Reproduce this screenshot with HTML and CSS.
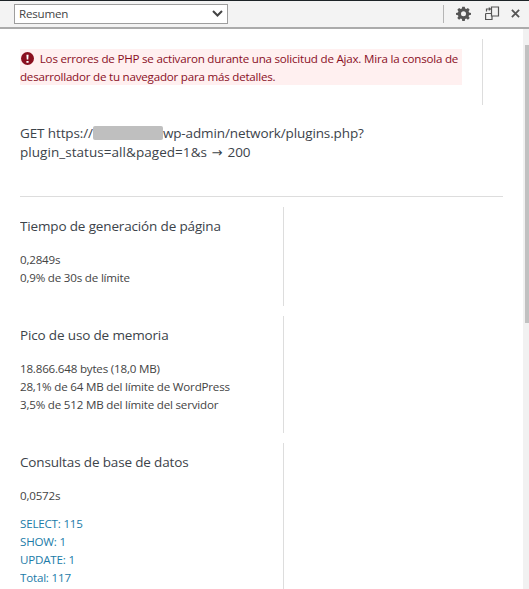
FILE: index.html
```html
<!DOCTYPE html>
<html lang="es">
<head>
<meta charset="utf-8">
<title>Resumen</title>
<link rel="stylesheet" href="styles.css">
</head>
<body>
<header class="toolbar">
  <div class="select"><span>Resumen</span>
    <svg class="chev" width="11" height="7" viewBox="0 0 11 7"><path d="M1 1l4.500 4.500L10 1" fill="none" stroke="#444" stroke-width="2"/></svg>
  </div>
  <div class="tools">
    <span class="sep"></span>
    <svg class="gear" width="15" height="15" viewBox="0 0 24 24"><path fill="#555" fill-rule="evenodd" d="M10 1h4l.6 3.100 1.900.8L19.100 3.100 21.900 5.900 20.100 8.500l.8 1.900L24 11v3l-3.100.6-.8 1.900 1.800 2.600-2.800 2.800-2.600-1.800-1.900.8L14 24h-4l-.6-3.100-1.900-.8-2.600 1.800-2.800-2.800 1.800-2.600-.8-1.900L0 14v-3l3.100-.6.8-1.900L2.100 5.900 4.900 3.100 7.500 4.900l1.900-.8zM12 8.500a4 4 0 1 0 0 8 4 4 0 0 0 0-8z"/></svg>
    <svg class="dock" width="15" height="15" viewBox="0 0 15 15"><path fill="none" stroke="#555" stroke-width="1.200" d="M6.500 1h7v9h-7zM.6 7.500h6.400M.6 7.500v6h6.400v-3.500M1.500 5.500V3h3"/><path fill="#555" d="M3.800 1l2.500 2-2.500 2z"/></svg>
    <svg class="close" width="9" height="9" viewBox="0 0 10 10"><path d="M1 1l8 8M9 1l-8 8" stroke="#555" stroke-width="2"/></svg>
  </div>
</header>
<div class="body">
  <main class="content">
    <div class="top">
      <p class="alert"><svg class="err" width="13" height="13" viewBox="0 0 12 12"><circle cx="6" cy="6" r="6" fill="#8a0f1f"/><path d="M5 2.500h2l-.3 4.500H5.300zM5 8.200h2v1.700H5z" fill="#fff"/></svg> Los errores de PHP se activaron durante una solicitud de Ajax. Mira la consola de desarrollador de tu navegador para más detalles.</p>
    </div>
    <p class="req">GET https://<span class="mask"></span>wp-admin/network/plugins.php?<br><span class="line2">plugin_status=all&amp;paged=1&amp;s</span> <span class="arrow">→</span> 200</p>
    <hr class="rule">
    <section class="sec s1">
      <h2>Tiempo de generación de página</h2>
      <p>0,2849s<br>0,9% de 30s de límite</p>
    </section>
    <section class="sec s2">
      <h2>Pico de uso de memoria</h2>
      <p>18.866.648 bytes (18,0 MB)<br>28,1% de 64 MB del límite de WordPress<br>3,5% de 512 MB del límite del servidor</p>
    </section>
    <section class="sec s3">
      <h2>Consultas de base de datos</h2>
      <p>0,0572s</p>
      <p class="links"><a>SELECT: 115</a><br><a>SHOW: 1</a><br><a>UPDATE: 1</a><br><a>Total: 117</a></p>
    </section>
  </main>
  <div class="scroll"><div class="thumb"></div></div>
</div>
</body>
</html>
```
FILE: styles.css
```css
* { box-sizing: border-box; }
html, body { margin: 0; height: 589px; overflow: hidden; }
body {
  background: #fff;
  color: #444;
  font: 11.6px/18px "Open Sans", "Noto Sans", sans-serif;
  letter-spacing: -.2px;
  display: flex;
  flex-direction: column;
}
.toolbar {
  height: 29px;
  flex: none;
  background: #f3f3f3;
  border-top: 1px solid #1d2327;
  border-bottom: 2px solid #ababab;
  display: flex;
  align-items: center;
  justify-content: space-between;
  padding: 0 9px 1px 14px;
}
.select {
  width: 214px;
  height: 20px;
  background: #fff;
  border: 1px solid #9e9e9e;
  display: flex;
  align-items: center;
  justify-content: space-between;
  padding: 0 4px 0 4px;
  color: #444;
}
.tools { display: flex; align-items: center; }
.sep { width: 1px; height: 18px; background: #b5b5b5; margin-right: 12px; }
.dock { margin-left: 14px; }
.close { margin-left: 11px; }
.body { flex: 1; display: flex; min-height: 0; }
.content { flex: 1; padding: 10px 20px 0; min-width: 0; overflow: hidden; }
.top {
  width: 463px;
  height: 66px;
  border-right: 1px solid #ddd;
  padding-top: 10px;
}
.alert {
  margin: 0;
  width: 442px;
  height: 36px;
  padding-top: 1px;
  background: #fff0f0;
  color: #8a0f1f;
  line-height: 18px;
  letter-spacing: -.22px;
}
.err { vertical-align: -2px; margin: 0 3px 0 1px; }
.req {
  margin: 19px 0 0;
  font-size: 13.5px;
  letter-spacing: -.12px;
  line-height: 19px;
  color: #3c434a;
}
.line2 { letter-spacing: .05px; }
.arrow { font-family: "DejaVu Sans", sans-serif; font-size: 13px; line-height: 0; margin: 0 2px 0 1px; }
.mask {
  display: inline-block;
  width: 70px;
  height: 14px;
  background: #bfbfbf;
  border-radius: 2px;
  vertical-align: -2px;
}
.rule { border: 0; height: 1px; background: #ddd; margin: 34px 0 10px; }
.sec { width: 264px; border-right: 1px solid #ddd; overflow: hidden; margin-bottom: 10px; }
.s1 { height: 99px; }
.s2 { height: 117px; }
.s3 { height: 150px; }
.sec h2 {
  margin: 9px 0 14px;
  font-size: 13.5px;
  letter-spacing: -.15px;
  font-weight: 400;
  line-height: 21px;
  color: #3c434a;
}
.sec p { margin: 0 0 10px; }
.links a { color: #1b7ba8; }
.scroll { width: 6px; flex: none; background: #f1f1f1; padding: 16px 0 0 2px; }
.thumb { height: 278px; background: #c1c1c1; }
```
